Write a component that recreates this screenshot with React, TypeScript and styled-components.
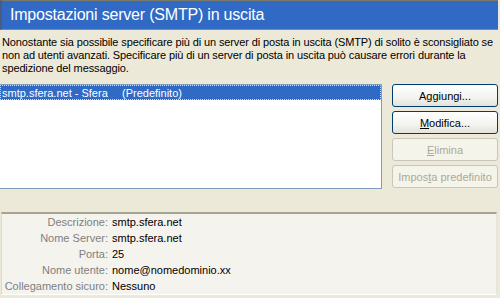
import React from 'react';
import styled, { createGlobalStyle } from 'styled-components';

const GlobalStyle = createGlobalStyle`
  html, body {
    margin: 0;
    padding: 0;
    background: #ece9d8;
  }
  body {
    font-family: "Liberation Sans", Arial, sans-serif;
    font-size: 11px;
    color: #000;
  }
`;

const Window = styled.div`
  width: 500px;
  height: 298px;
  background: #ece9d8;
  display: flex;
  flex-direction: column;
  overflow: hidden;
`;

const TitleBar = styled.div`
  height: 28px;
  margin: 0 2px 0 0;
  background: #316ac5;
  border-top: 1px solid #7a7a6a;
  border-bottom: 1px solid #8a8a78;
  border-left: 2px solid #4a5a80;
  display: flex;
  align-items: center;
  padding-left: 8px;
  color: #fff;
  font-size: 16px;
  letter-spacing: -0.2px;
`;

const Intro = styled.p`
  margin: 6px 0 0 2px;
  line-height: 13px;
  width: 498px;
  letter-spacing: -0.12px;
`;

const Middle = styled.div`
  display: flex;
  margin-top: 9px;
  gap: 10px;
`;

const ListBox = styled.div`
  width: 381px;
  height: 103px;
  background: #fff;
  border: 1px solid #7f9db9;
  border-left: none;
`;

const ListRow = styled.div<{ $selected?: boolean }>`
  height: 15px;
  display: flex;
  align-items: center;
  padding-left: 2px;
  background: ${(p) => (p.$selected ? '#316ac5' : 'transparent')};
  color: ${(p) => (p.$selected ? '#fff' : '#000')};
  outline: ${(p) => (p.$selected ? '1px dotted #f5e07a' : 'none')};
  outline-offset: -1px;
`;

const ServerName = styled.span`
  width: 120px;
`;

const Buttons = styled.div`
  display: flex;
  flex-direction: column;
  gap: 4px;
`;

const Button = styled.button<{ $disabled?: boolean }>`
  width: 106px;
  height: 23px;
  padding: 0;
  font-family: "Liberation Sans", Arial, sans-serif;
  font-size: 11px;
  border-radius: 3px;
  border: 1px solid ${(p) => (p.$disabled ? '#c9c7ba' : '#003c74')};
  background: ${(p) =>
    p.$disabled ? '#f5f4ea' : 'linear-gradient(#ffffff, #f3f3ef 60%, #e3e2da)'};
  color: ${(p) => (p.$disabled ? '#aca899' : '#000')};

  u {
    text-decoration: underline;
  }
`;

const Details = styled.div`
  margin: 23px 3px 0 1px;
  height: 80px;
  background: #f4f3ee;
  border-top: 2px solid #a5a58f;
  border-left: 1px solid #dcdacb;
  border-right: 1px solid #e6e4d6;
  border-bottom: 1px solid #fff;
  display: grid;
  grid-template-columns: 106px 1fr;
  grid-auto-rows: 16px;
  column-gap: 4px;
  align-items: center;
  align-content: start;
`;

const Label = styled.span`
  text-align: right;
  color: #808080;
  white-space: nowrap;
`;

const Value = styled.span`
  color: #000;
`;

const details: [string, string][] = [
  ['Descrizione:', 'smtp.sfera.net'],
  ['Nome Server:', 'smtp.sfera.net'],
  ['Porta:', '25'],
  ['Nome utente:', 'nome@nomedominio.xx'],
  ['Collegamento sicuro:', 'Nessuno'],
];

const App = () => {
  return (
    <>
      <GlobalStyle />
      <Window>
        <TitleBar>Impostazioni server (SMTP) in uscita</TitleBar>
        <Intro>
          Nonostante sia possibile specificare più di un server di posta in uscita (SMTP) di solito è
          sconsigliato se non ad utenti avanzati. Specificare più di un server di posta in uscita può
          causare errori durante la spedizione del messaggio.
        </Intro>
        <Middle>
          <ListBox>
            <ListRow $selected>
              <ServerName>smtp.sfera.net - Sfera</ServerName>
              <span>(Predefinito)</span>
            </ListRow>
          </ListBox>
          <Buttons>
            <Button>Aggiungi...</Button>
            <Button>
              <u>M</u>odifica...
            </Button>
            <Button $disabled>
              <u>E</u>limina
            </Button>
            <Button $disabled>
              Impos<u>t</u>a predefinito
            </Button>
          </Buttons>
        </Middle>
        <Details>
          {details.map(([label, value]) => (
            <React.Fragment key={label}>
              <Label>{label}</Label>
              <Value>{value}</Value>
            </React.Fragment>
          ))}
        </Details>
      </Window>
    </>
  );
};

export default App;
